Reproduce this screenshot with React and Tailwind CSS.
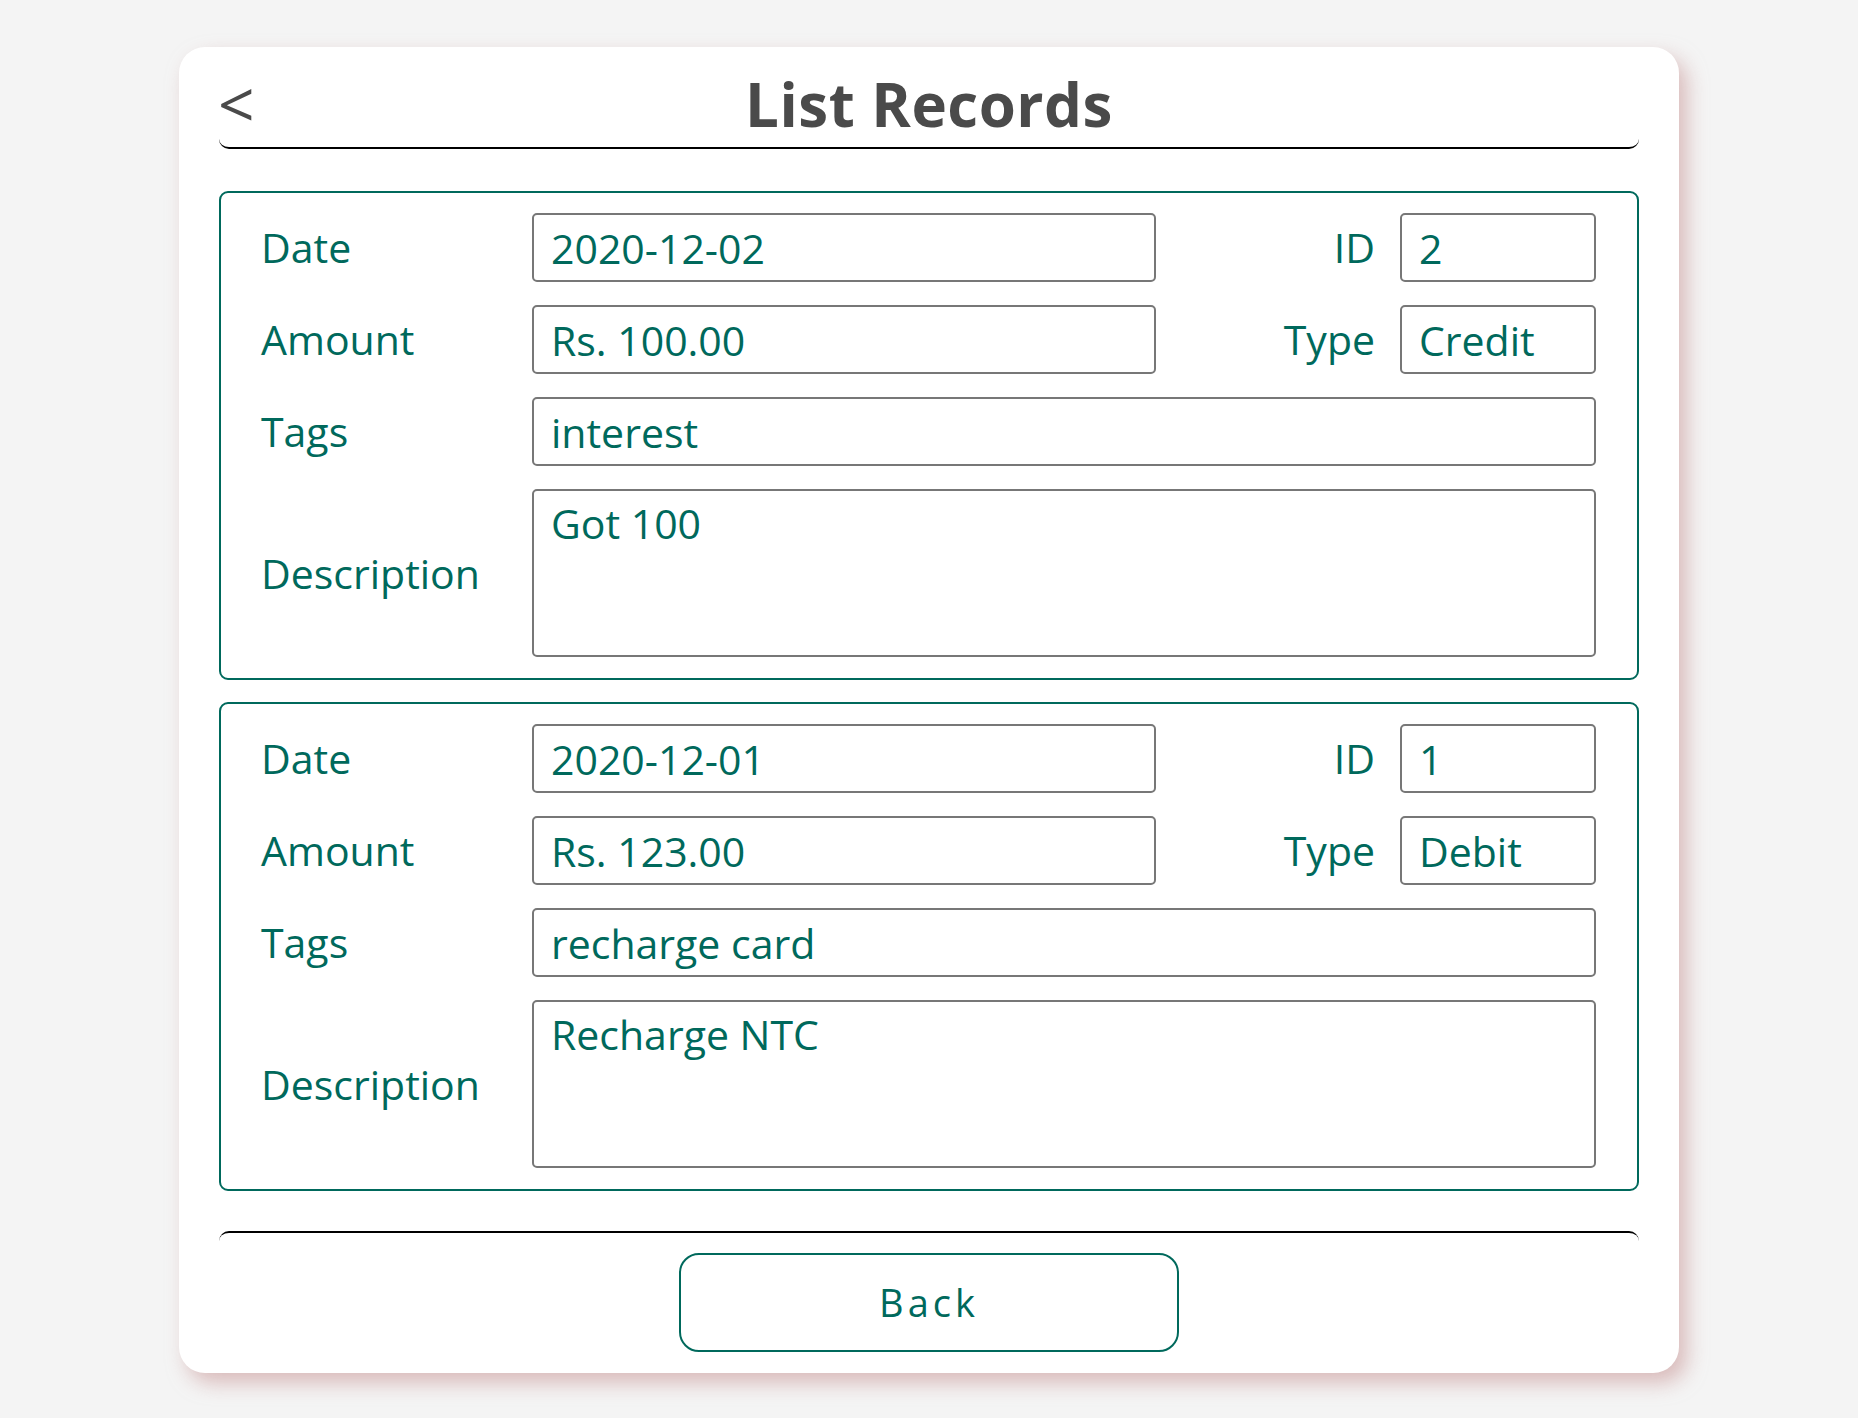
import React from "react";

const records = [
  { id: 2, date: "2020-12-02", amount: "Rs. 100.00", type: "Credit", tags: "interest", description: "Got 100" },
  { id: 1, date: "2020-12-01", amount: "Rs. 123.00", type: "Debit", tags: "recharge card", description: "Recharge NTC" },
];

const fieldCls =
  "block w-full h-[69px] border-2 border-[#777777] rounded-[5px] bg-white pl-[17px] pr-3 text-[41px] text-[#00695c] outline-none";

function Label({ children, className = "" }) {
  return <div className={"text-[41px] text-[#00695c] leading-none " + className}>{children}</div>;
}

function RecordCard({ r }) {
  return (
    <div className="border-2 border-[#00695c] rounded-[9px] pt-[20px] pb-[21px] pl-[40px] pr-[41px] flex flex-col gap-[23px]">
      <div className="flex items-center">
        <Label className="w-[271px] shrink-0">Date</Label>
        <input readOnly value={r.date} className={fieldCls + " !w-[624px] shrink-0"} />
        <Label className="flex-1 text-right pr-[25px]">ID</Label>
        <input readOnly value={r.id} className={fieldCls + " !w-[196px] shrink-0"} />
      </div>
      <div className="flex items-center">
        <Label className="w-[271px] shrink-0">Amount</Label>
        <input readOnly value={r.amount} className={fieldCls + " !w-[624px] shrink-0"} />
        <Label className="flex-1 text-right pr-[25px]">Type</Label>
        <input readOnly value={r.type} className={fieldCls + " !w-[196px] shrink-0"} />
      </div>
      <div className="flex items-center">
        <Label className="w-[271px] shrink-0">Tags</Label>
        <input readOnly value={r.tags} className={fieldCls + " flex-1"} />
      </div>
      <div className="flex items-center">
        <Label className="w-[271px] shrink-0">Description</Label>
        <textarea
          readOnly
          value={r.description}
          className="block flex-1 h-[168px] resize-none border-2 border-[#777777] rounded-[5px] bg-white pl-[17px] pr-3 pt-[6px] text-[41px] leading-[1.3] text-[#00695c] outline-none"
        />
      </div>
    </div>
  );
}

export default function App() {
  return (
    <div className="min-h-screen bg-[#f4f4f4] pt-[47px] pb-[46px]" style={{ fontFamily: '"Open Sans", "Liberation Sans", sans-serif' }}>
      <div className="mx-auto w-[1500px] bg-white rounded-[26px] shadow-[8px_10px_20px_rgba(200,150,150,0.6)] px-[40px] pt-[16px] pb-[21px]">
        <div className="relative h-[86px] pt-[1px] border-b-2 border-black rounded-b-[10px] flex items-start justify-center">
          <span className="absolute left-[-1px] top-[6px] text-[64px] font-normal leading-[70px] text-[#4a4a4a]">&lt;</span>
          <h1 className="text-[60px] font-bold leading-[80px] text-[#4a4a4a] tracking-[0.5px]">List Records</h1>
        </div>

        <div className="mt-[42px] flex flex-col gap-[22px]">
          {records.map((r) => (
            <RecordCard key={r.id} r={r} />
          ))}
        </div>

        <div className="mt-[40px] border-t-2 border-black rounded-t-[10px] pt-[20px] flex justify-center">
          <button className="w-[500px] h-[99px] border-2 border-[#00695c] rounded-[20px] bg-white text-[38px] text-[#00695c] tracking-[4px]">
            Back
          </button>
        </div>
      </div>
    </div>
  );
}
